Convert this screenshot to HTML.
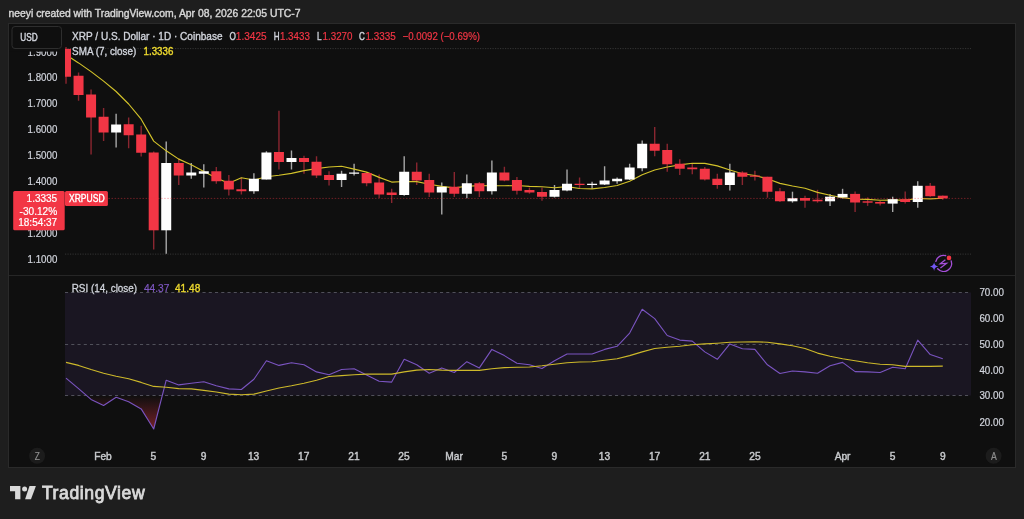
<!DOCTYPE html><html><head><meta charset="utf-8"><style>html,body{margin:0;padding:0;background:#1e1e1e;width:1024px;height:519px;overflow:hidden}svg{display:block;will-change:transform}text{font-family:"Liberation Sans",sans-serif}</style></head><body>
<svg width="1024" height="519" viewBox="0 0 1024 519">
<rect x="0" y="0" width="1024" height="519" fill="#1e1e1e"/>
<text x="8.5" y="16.6" font-size="10.4" fill="#d6d6d6" stroke="#d6d6d6" stroke-width="0.4" textLength="292" lengthAdjust="spacingAndGlyphs">neeyi created with TradingView.com, Apr 08, 2026 22:05 UTC-7</text>
<rect x="8.5" y="23.5" width="1007" height="444" fill="#0f0f0f" stroke="#2a2a2a" stroke-width="1"/>
<defs><clipPath id="cm"><rect x="65" y="24" width="906" height="251"/></clipPath><clipPath id="cr"><rect x="65" y="276" width="906" height="160"/></clipPath><linearGradient id="os" x1="0" y1="395.4" x2="0" y2="429" gradientUnits="userSpaceOnUse"><stop offset="0" stop-color="#f23645" stop-opacity="0"/><stop offset="1" stop-color="#f23645" stop-opacity="0.45"/></linearGradient></defs>
<line x1="65" y1="48.6" x2="971" y2="48.6" stroke="#353535" stroke-width="1" stroke-dasharray="1.2 1.3"/>
<line x1="65" y1="254.1" x2="971" y2="254.1" stroke="#353535" stroke-width="1" stroke-dasharray="1.2 1.3"/>
<line x1="9" y1="275.5" x2="1015" y2="275.5" stroke="#262626" stroke-width="1"/>
<g clip-path="url(#cm)">
<line x1="66.02" y1="47.00" x2="66.02" y2="83.75" stroke="#8a2630" stroke-width="1.4"/>
<line x1="78.55" y1="72.50" x2="78.55" y2="100.75" stroke="#8a2630" stroke-width="1.4"/>
<line x1="91.07" y1="89.50" x2="91.07" y2="154.50" stroke="#8a2630" stroke-width="1.4"/>
<line x1="103.60" y1="108.00" x2="103.60" y2="141.00" stroke="#8a2630" stroke-width="1.4"/>
<line x1="116.12" y1="113.75" x2="116.12" y2="147.50" stroke="#a8a8a8" stroke-width="1.4"/>
<line x1="128.65" y1="117.50" x2="128.65" y2="148.25" stroke="#8a2630" stroke-width="1.4"/>
<line x1="141.18" y1="125.75" x2="141.18" y2="156.50" stroke="#8a2630" stroke-width="1.4"/>
<line x1="153.70" y1="151.50" x2="153.70" y2="249.50" stroke="#8a2630" stroke-width="1.4"/>
<line x1="166.22" y1="141.50" x2="166.22" y2="253.75" stroke="#a8a8a8" stroke-width="1.4"/>
<line x1="178.75" y1="158.50" x2="178.75" y2="185.00" stroke="#8a2630" stroke-width="1.4"/>
<line x1="191.27" y1="163.00" x2="191.27" y2="178.75" stroke="#a8a8a8" stroke-width="1.4"/>
<line x1="203.80" y1="164.25" x2="203.80" y2="187.50" stroke="#a8a8a8" stroke-width="1.4"/>
<line x1="216.32" y1="167.00" x2="216.32" y2="183.75" stroke="#8a2630" stroke-width="1.4"/>
<line x1="228.85" y1="175.00" x2="228.85" y2="195.50" stroke="#8a2630" stroke-width="1.4"/>
<line x1="241.38" y1="177.50" x2="241.38" y2="194.50" stroke="#8a2630" stroke-width="1.4"/>
<line x1="253.90" y1="173.25" x2="253.90" y2="193.75" stroke="#a8a8a8" stroke-width="1.4"/>
<line x1="266.43" y1="151.25" x2="266.43" y2="179.50" stroke="#a8a8a8" stroke-width="1.4"/>
<line x1="278.95" y1="110.75" x2="278.95" y2="169.50" stroke="#8a2630" stroke-width="1.4"/>
<line x1="291.48" y1="150.50" x2="291.48" y2="169.50" stroke="#a8a8a8" stroke-width="1.4"/>
<line x1="304.00" y1="155.75" x2="304.00" y2="173.75" stroke="#8a2630" stroke-width="1.4"/>
<line x1="316.52" y1="156.25" x2="316.52" y2="178.00" stroke="#8a2630" stroke-width="1.4"/>
<line x1="329.05" y1="171.25" x2="329.05" y2="185.50" stroke="#8a2630" stroke-width="1.4"/>
<line x1="341.57" y1="170.75" x2="341.57" y2="187.00" stroke="#a8a8a8" stroke-width="1.4"/>
<line x1="354.10" y1="163.75" x2="354.10" y2="175.50" stroke="#a8a8a8" stroke-width="1.4"/>
<line x1="366.62" y1="172.00" x2="366.62" y2="186.25" stroke="#8a2630" stroke-width="1.4"/>
<line x1="379.15" y1="174.50" x2="379.15" y2="198.00" stroke="#8a2630" stroke-width="1.4"/>
<line x1="391.67" y1="188.75" x2="391.67" y2="203.00" stroke="#8a2630" stroke-width="1.4"/>
<line x1="404.20" y1="156.25" x2="404.20" y2="195.75" stroke="#a8a8a8" stroke-width="1.4"/>
<line x1="416.73" y1="162.50" x2="416.73" y2="185.00" stroke="#8a2630" stroke-width="1.4"/>
<line x1="429.25" y1="173.75" x2="429.25" y2="197.00" stroke="#8a2630" stroke-width="1.4"/>
<line x1="441.77" y1="182.50" x2="441.77" y2="214.50" stroke="#a8a8a8" stroke-width="1.4"/>
<line x1="454.30" y1="172.00" x2="454.30" y2="197.00" stroke="#8a2630" stroke-width="1.4"/>
<line x1="466.83" y1="174.50" x2="466.83" y2="198.25" stroke="#a8a8a8" stroke-width="1.4"/>
<line x1="479.35" y1="182.00" x2="479.35" y2="197.00" stroke="#8a2630" stroke-width="1.4"/>
<line x1="491.88" y1="160.50" x2="491.88" y2="194.50" stroke="#a8a8a8" stroke-width="1.4"/>
<line x1="504.40" y1="166.75" x2="504.40" y2="181.25" stroke="#8a2630" stroke-width="1.4"/>
<line x1="516.92" y1="177.00" x2="516.92" y2="194.50" stroke="#8a2630" stroke-width="1.4"/>
<line x1="529.45" y1="187.50" x2="529.45" y2="193.75" stroke="#8a2630" stroke-width="1.4"/>
<line x1="541.98" y1="187.50" x2="541.98" y2="200.75" stroke="#8a2630" stroke-width="1.4"/>
<line x1="554.50" y1="185.00" x2="554.50" y2="197.50" stroke="#a8a8a8" stroke-width="1.4"/>
<line x1="567.02" y1="169.50" x2="567.02" y2="191.25" stroke="#a8a8a8" stroke-width="1.4"/>
<line x1="579.55" y1="177.50" x2="579.55" y2="188.00" stroke="#8a2630" stroke-width="1.4"/>
<line x1="592.08" y1="181.75" x2="592.08" y2="188.75" stroke="#a8a8a8" stroke-width="1.4"/>
<line x1="604.60" y1="166.25" x2="604.60" y2="185.00" stroke="#a8a8a8" stroke-width="1.4"/>
<line x1="617.12" y1="177.50" x2="617.12" y2="183.75" stroke="#a8a8a8" stroke-width="1.4"/>
<line x1="629.65" y1="163.75" x2="629.65" y2="180.00" stroke="#a8a8a8" stroke-width="1.4"/>
<line x1="642.18" y1="140.50" x2="642.18" y2="171.25" stroke="#a8a8a8" stroke-width="1.4"/>
<line x1="654.70" y1="127.00" x2="654.70" y2="156.25" stroke="#8a2630" stroke-width="1.4"/>
<line x1="667.23" y1="143.75" x2="667.23" y2="171.75" stroke="#8a2630" stroke-width="1.4"/>
<line x1="679.75" y1="159.25" x2="679.75" y2="175.00" stroke="#8a2630" stroke-width="1.4"/>
<line x1="692.28" y1="163.75" x2="692.28" y2="174.25" stroke="#8a2630" stroke-width="1.4"/>
<line x1="704.80" y1="167.00" x2="704.80" y2="180.50" stroke="#8a2630" stroke-width="1.4"/>
<line x1="717.33" y1="173.75" x2="717.33" y2="188.75" stroke="#8a2630" stroke-width="1.4"/>
<line x1="729.85" y1="163.75" x2="729.85" y2="190.50" stroke="#a8a8a8" stroke-width="1.4"/>
<line x1="742.38" y1="171.25" x2="742.38" y2="185.00" stroke="#8a2630" stroke-width="1.4"/>
<line x1="754.90" y1="170.75" x2="754.90" y2="180.50" stroke="#8a2630" stroke-width="1.4"/>
<line x1="767.43" y1="176.75" x2="767.43" y2="197.75" stroke="#8a2630" stroke-width="1.4"/>
<line x1="779.95" y1="188.00" x2="779.95" y2="202.00" stroke="#8a2630" stroke-width="1.4"/>
<line x1="792.48" y1="191.70" x2="792.48" y2="202.60" stroke="#a8a8a8" stroke-width="1.4"/>
<line x1="805.00" y1="195.80" x2="805.00" y2="207.70" stroke="#8a2630" stroke-width="1.4"/>
<line x1="817.53" y1="189.80" x2="817.53" y2="202.70" stroke="#8a2630" stroke-width="1.4"/>
<line x1="830.05" y1="193.90" x2="830.05" y2="205.90" stroke="#a8a8a8" stroke-width="1.4"/>
<line x1="842.58" y1="188.80" x2="842.58" y2="198.50" stroke="#a8a8a8" stroke-width="1.4"/>
<line x1="855.10" y1="191.60" x2="855.10" y2="212.00" stroke="#8a2630" stroke-width="1.4"/>
<line x1="867.62" y1="197.40" x2="867.62" y2="205.90" stroke="#8a2630" stroke-width="1.4"/>
<line x1="880.15" y1="200.90" x2="880.15" y2="205.50" stroke="#8a2630" stroke-width="1.4"/>
<line x1="892.68" y1="196.70" x2="892.68" y2="212.00" stroke="#a8a8a8" stroke-width="1.4"/>
<line x1="905.20" y1="191.60" x2="905.20" y2="203.60" stroke="#8a2630" stroke-width="1.4"/>
<line x1="917.73" y1="181.20" x2="917.73" y2="207.80" stroke="#a8a8a8" stroke-width="1.4"/>
<line x1="930.25" y1="183.10" x2="930.25" y2="196.70" stroke="#8a2630" stroke-width="1.4"/>
<line x1="942.78" y1="195.50" x2="942.78" y2="199.70" stroke="#8a2630" stroke-width="1.4"/>
<polyline points="66.02,54.70 78.55,62.90 91.07,71.60 103.60,81.10 116.12,91.50 128.65,104.00 141.18,119.18 153.70,141.11 166.22,150.83 178.75,159.11 191.27,164.83 203.80,171.51 216.32,178.08 228.85,183.33 241.38,177.75 253.90,180.00 266.43,176.71 278.95,175.21 291.48,173.32 304.00,170.57 316.52,168.57 329.05,166.96 341.57,166.25 354.10,169.11 366.62,172.14 379.15,177.36 391.67,182.07 404.20,181.54 416.73,181.61 429.25,184.29 441.77,186.32 454.30,187.82 466.83,186.21 479.35,185.68 491.88,185.79 504.40,185.79 516.92,185.54 529.45,186.36 541.98,186.79 554.50,187.75 567.02,186.68 579.55,188.46 592.08,188.93 604.60,187.46 617.12,185.50 629.65,181.32 642.18,174.71 654.70,170.00 667.23,167.04 679.75,164.89 692.28,163.29 704.80,163.39 717.33,165.89 729.85,170.00 742.38,173.71 754.90,175.50 767.43,178.79 779.95,183.36 792.48,186.03 805.00,188.27 817.53,192.39 830.05,195.24 842.58,197.69 855.10,199.22 867.62,199.43 880.15,200.20 892.68,199.99 905.20,200.09 917.73,198.53 930.25,198.86 942.78,198.27" fill="none" stroke="#d2c22a" stroke-width="1.15" stroke-linejoin="round"/>
<rect x="61.02" y="48.90" width="10" height="27.85" fill="#f23645"/>
<rect x="73.55" y="75.75" width="10" height="19.25" fill="#f23645"/>
<rect x="86.07" y="94.50" width="10" height="23.00" fill="#f23645"/>
<rect x="98.60" y="116.75" width="10" height="15.75" fill="#f23645"/>
<rect x="111.12" y="124.50" width="10" height="8.00" fill="#ffffff"/>
<rect x="123.65" y="124.25" width="10" height="11.00" fill="#f23645"/>
<rect x="136.18" y="134.50" width="10" height="18.25" fill="#f23645"/>
<rect x="148.70" y="152.50" width="10" height="77.80" fill="#f23645"/>
<rect x="161.22" y="163.00" width="10" height="67.30" fill="#ffffff"/>
<rect x="173.75" y="163.00" width="10" height="12.50" fill="#f23645"/>
<rect x="186.27" y="172.50" width="10" height="3.00" fill="#ffffff"/>
<rect x="198.80" y="171.25" width="10" height="2.50" fill="#ffffff"/>
<rect x="211.32" y="171.25" width="10" height="10.00" fill="#f23645"/>
<rect x="223.85" y="180.75" width="10" height="8.75" fill="#f23645"/>
<rect x="236.38" y="189.25" width="10" height="2.00" fill="#f23645"/>
<rect x="248.90" y="178.75" width="10" height="12.50" fill="#ffffff"/>
<rect x="261.43" y="152.50" width="10" height="27.00" fill="#ffffff"/>
<rect x="273.95" y="152.00" width="10" height="10.00" fill="#f23645"/>
<rect x="286.48" y="158.00" width="10" height="4.00" fill="#ffffff"/>
<rect x="299.00" y="158.00" width="10" height="4.00" fill="#f23645"/>
<rect x="311.52" y="161.75" width="10" height="13.75" fill="#f23645"/>
<rect x="324.05" y="175.00" width="10" height="5.00" fill="#f23645"/>
<rect x="336.57" y="173.75" width="10" height="6.25" fill="#ffffff"/>
<rect x="349.10" y="172.50" width="10" height="1.25" fill="#ffffff"/>
<rect x="361.62" y="173.00" width="10" height="10.25" fill="#f23645"/>
<rect x="374.15" y="182.50" width="10" height="12.00" fill="#f23645"/>
<rect x="386.67" y="192.50" width="10" height="2.50" fill="#f23645"/>
<rect x="399.20" y="171.75" width="10" height="23.25" fill="#ffffff"/>
<rect x="411.73" y="171.75" width="10" height="8.75" fill="#f23645"/>
<rect x="424.25" y="180.00" width="10" height="12.50" fill="#f23645"/>
<rect x="436.77" y="186.75" width="10" height="5.75" fill="#ffffff"/>
<rect x="449.30" y="186.75" width="10" height="7.00" fill="#f23645"/>
<rect x="461.83" y="183.25" width="10" height="10.50" fill="#ffffff"/>
<rect x="474.35" y="183.25" width="10" height="8.00" fill="#f23645"/>
<rect x="486.88" y="172.50" width="10" height="18.75" fill="#ffffff"/>
<rect x="499.40" y="172.50" width="10" height="8.00" fill="#f23645"/>
<rect x="511.92" y="180.00" width="10" height="10.75" fill="#f23645"/>
<rect x="524.45" y="190.00" width="10" height="2.50" fill="#f23645"/>
<rect x="536.98" y="192.00" width="10" height="4.75" fill="#f23645"/>
<rect x="549.50" y="190.00" width="10" height="6.75" fill="#ffffff"/>
<rect x="562.02" y="183.75" width="10" height="6.75" fill="#ffffff"/>
<rect x="574.55" y="183.75" width="10" height="1.25" fill="#f23645"/>
<rect x="587.08" y="183.75" width="10" height="1.25" fill="#ffffff"/>
<rect x="599.60" y="180.50" width="10" height="4.00" fill="#ffffff"/>
<rect x="612.12" y="178.75" width="10" height="2.50" fill="#ffffff"/>
<rect x="624.65" y="167.50" width="10" height="12.00" fill="#ffffff"/>
<rect x="637.18" y="143.75" width="10" height="24.50" fill="#ffffff"/>
<rect x="649.70" y="143.75" width="10" height="7.00" fill="#f23645"/>
<rect x="662.23" y="150.00" width="10" height="14.25" fill="#f23645"/>
<rect x="674.75" y="163.75" width="10" height="5.00" fill="#f23645"/>
<rect x="687.28" y="167.50" width="10" height="1.75" fill="#f23645"/>
<rect x="699.80" y="168.75" width="10" height="10.75" fill="#f23645"/>
<rect x="712.33" y="178.75" width="10" height="6.25" fill="#f23645"/>
<rect x="724.85" y="172.50" width="10" height="12.50" fill="#ffffff"/>
<rect x="737.38" y="172.50" width="10" height="4.25" fill="#f23645"/>
<rect x="749.90" y="175.50" width="10" height="1.25" fill="#f23645"/>
<rect x="762.43" y="176.75" width="10" height="15.00" fill="#f23645"/>
<rect x="774.95" y="191.25" width="10" height="10.00" fill="#f23645"/>
<rect x="787.48" y="198.20" width="10" height="3.10" fill="#ffffff"/>
<rect x="800.00" y="198.00" width="10" height="2.70" fill="#f23645"/>
<rect x="812.53" y="199.70" width="10" height="1.60" fill="#f23645"/>
<rect x="825.05" y="196.70" width="10" height="4.60" fill="#ffffff"/>
<rect x="837.58" y="193.90" width="10" height="3.50" fill="#ffffff"/>
<rect x="850.10" y="193.90" width="10" height="8.60" fill="#f23645"/>
<rect x="862.62" y="201.30" width="10" height="1.40" fill="#f23645"/>
<rect x="875.15" y="202.00" width="10" height="1.60" fill="#f23645"/>
<rect x="887.68" y="199.20" width="10" height="4.40" fill="#ffffff"/>
<rect x="900.20" y="199.20" width="10" height="2.80" fill="#f23645"/>
<rect x="912.73" y="185.80" width="10" height="16.20" fill="#ffffff"/>
<rect x="925.25" y="185.80" width="10" height="10.40" fill="#f23645"/>
<rect x="937.78" y="195.70" width="10" height="2.70" fill="#f23645"/>
</g>
<line x1="65" y1="198.4" x2="971" y2="198.4" stroke="#f23645" stroke-opacity="0.42" stroke-width="1" stroke-dasharray="1.5 1.6"/>
<rect x="65" y="292.5" width="906" height="103" fill="#1a1622"/>
<line x1="65" y1="292.5" x2="971" y2="292.5" stroke="#50505a" stroke-width="1" stroke-dasharray="3.1 3.15"/>
<line x1="65" y1="344.5" x2="971" y2="344.5" stroke="#50505a" stroke-width="1" stroke-dasharray="3.1 3.15"/>
<line x1="65" y1="395.5" x2="971" y2="395.5" stroke="#50505a" stroke-width="1" stroke-dasharray="3.1 3.15"/>
<g clip-path="url(#cr)">
<polygon points="86.44,395.40 91.07,399.40 103.60,405.50 116.12,397.20 128.65,401.80 141.18,408.90 153.70,429.00 162.32,395.40" fill="url(#os)"/>
<polyline points="66.02,378.10 78.55,388.60 91.07,399.40 103.60,405.50 116.12,397.20 128.65,401.80 141.18,408.90 153.70,429.00 166.22,380.20 178.75,384.90 191.27,383.30 203.80,381.80 216.32,385.80 228.85,388.90 241.38,389.50 253.90,379.30 266.43,360.80 278.95,365.40 291.48,362.70 304.00,364.80 316.52,371.90 329.05,374.70 341.57,369.50 354.10,368.80 366.62,375.00 379.15,381.20 391.67,382.10 404.20,359.30 416.73,364.80 429.25,373.20 441.77,367.90 454.30,372.50 466.83,361.70 479.35,367.90 491.88,349.40 504.40,355.60 516.92,363.30 529.45,364.80 541.98,368.50 554.50,360.80 567.02,354.00 579.55,354.00 592.08,354.00 604.60,349.40 617.12,346.30 629.65,333.10 642.18,309.30 654.70,318.60 667.23,335.50 679.75,340.10 692.28,341.10 704.80,351.90 717.33,359.30 729.85,343.90 742.38,348.80 754.90,349.40 767.43,364.80 779.95,373.50 792.48,371.00 805.00,371.90 817.53,373.20 830.05,365.70 842.58,362.40 855.10,371.60 867.62,371.90 880.15,372.50 892.68,367.30 905.20,368.80 917.73,340.10 930.25,354.60 942.78,358.70" fill="none" stroke="#7a54c0" stroke-width="1.1" stroke-linejoin="round"/>
<polyline points="66.02,362.40 78.55,365.40 91.07,369.50 103.60,373.20 116.12,376.20 128.65,378.70 141.18,382.40 153.70,386.40 166.22,387.30 178.75,388.60 191.27,388.90 203.80,390.40 216.32,392.00 228.85,394.10 241.38,394.70 253.90,394.10 266.43,391.00 278.95,388.00 291.48,385.80 304.00,383.30 316.52,380.20 329.05,376.50 341.57,375.60 354.10,374.70 366.62,374.10 379.15,374.10 391.67,374.10 404.20,371.90 416.73,370.10 429.25,369.50 441.77,370.10 454.30,370.40 466.83,370.40 479.35,370.40 491.88,368.80 504.40,367.60 516.92,367.30 529.45,367.00 541.98,365.80 554.50,364.20 567.02,362.70 579.55,362.00 592.08,361.70 604.60,360.20 617.12,358.70 629.65,355.60 642.18,351.90 654.70,348.50 667.23,347.20 679.75,346.30 692.28,344.80 704.80,343.90 717.33,343.20 729.85,342.30 742.38,342.00 754.90,341.70 767.43,342.30 779.95,343.90 792.48,345.70 805.00,348.50 817.53,353.10 830.05,356.20 842.58,358.70 855.10,360.80 867.62,362.70 880.15,364.20 892.68,364.80 905.20,366.40 917.73,366.40 930.25,366.40 942.78,366.10" fill="none" stroke="#cdb92a" stroke-width="1.1" stroke-linejoin="round"/>
</g>
<text x="57.3" y="55.90" font-size="10" fill="#d1d4dc" text-anchor="end" textLength="29.7" lengthAdjust="spacingAndGlyphs" stroke="#d1d4dc" stroke-width="0.2">1.9000</text>
<text x="57.3" y="81.35" font-size="10" fill="#d1d4dc" text-anchor="end" textLength="29.7" lengthAdjust="spacingAndGlyphs" stroke="#d1d4dc" stroke-width="0.2">1.8000</text>
<text x="57.3" y="107.10" font-size="10" fill="#d1d4dc" text-anchor="end" textLength="29.7" lengthAdjust="spacingAndGlyphs" stroke="#d1d4dc" stroke-width="0.2">1.7000</text>
<text x="57.3" y="132.90" font-size="10" fill="#d1d4dc" text-anchor="end" textLength="29.7" lengthAdjust="spacingAndGlyphs" stroke="#d1d4dc" stroke-width="0.2">1.6000</text>
<text x="57.3" y="158.70" font-size="10" fill="#d1d4dc" text-anchor="end" textLength="29.7" lengthAdjust="spacingAndGlyphs" stroke="#d1d4dc" stroke-width="0.2">1.5000</text>
<text x="57.3" y="184.60" font-size="10" fill="#d1d4dc" text-anchor="end" textLength="29.7" lengthAdjust="spacingAndGlyphs" stroke="#d1d4dc" stroke-width="0.2">1.4000</text>
<text x="57.3" y="236.60" font-size="10" fill="#d1d4dc" text-anchor="end" textLength="29.7" lengthAdjust="spacingAndGlyphs" stroke="#d1d4dc" stroke-width="0.2">1.2000</text>
<text x="57.3" y="262.50" font-size="10" fill="#d1d4dc" text-anchor="end" textLength="29.7" lengthAdjust="spacingAndGlyphs" stroke="#d1d4dc" stroke-width="0.2">1.1000</text>
<rect x="9" y="24" width="55" height="27.6" fill="#0f0f0f"/>
<rect x="12" y="26.5" width="49.5" height="22" rx="3" fill="#0f0f0f" stroke="#2e2e2e" stroke-width="1"/>
<text x="20.2" y="41" font-size="10.3" fill="#d1d4dc" stroke="#d1d4dc" stroke-width="0.45" textLength="17.4" lengthAdjust="spacingAndGlyphs">USD</text>
<text x="72.1" y="39.95" font-size="10.6" fill="#d1d4dc" stroke="#d1d4dc" stroke-width="0.35" textLength="150.4" lengthAdjust="spacingAndGlyphs">XRP / U.S. Dollar · 1D · Coinbase</text>
<text x="229.4" y="40.1" font-size="10.6" fill="#d1d4dc" stroke="#d1d4dc" stroke-width="0.4" textLength="6.4" lengthAdjust="spacingAndGlyphs">O</text>
<text x="235.8" y="40.1" font-size="10.6" fill="#f23645" textLength="30.8" lengthAdjust="spacingAndGlyphs" stroke="#f23645" stroke-width="0.2">1.3425</text>
<text x="273.7" y="40.1" font-size="10.6" fill="#d1d4dc" stroke="#d1d4dc" stroke-width="0.4" textLength="5.8" lengthAdjust="spacingAndGlyphs">H</text>
<text x="280" y="40.1" font-size="10.6" fill="#f23645" textLength="29.8" lengthAdjust="spacingAndGlyphs" stroke="#f23645" stroke-width="0.2">1.3433</text>
<text x="317.1" y="40.1" font-size="10.6" fill="#d1d4dc" stroke="#d1d4dc" stroke-width="0.4" textLength="4.6" lengthAdjust="spacingAndGlyphs">L</text>
<text x="322.5" y="40.1" font-size="10.6" fill="#f23645" textLength="30" lengthAdjust="spacingAndGlyphs" stroke="#f23645" stroke-width="0.2">1.3270</text>
<text x="359.1" y="40.1" font-size="10.6" fill="#d1d4dc" stroke="#d1d4dc" stroke-width="0.4" textLength="5.8" lengthAdjust="spacingAndGlyphs">C</text>
<text x="365.5" y="40.1" font-size="10.6" fill="#f23645" textLength="30.3" lengthAdjust="spacingAndGlyphs" stroke="#f23645" stroke-width="0.2">1.3335</text>
<text x="402.6" y="40.1" font-size="10.6" fill="#f23645" textLength="77.4" lengthAdjust="spacingAndGlyphs" stroke="#f23645" stroke-width="0.2">−0.0092 (−0.69%)</text>
<text x="72.1" y="54.7" font-size="10.4" fill="#d1d4dc" stroke="#d1d4dc" stroke-width="0.35" textLength="64.1" lengthAdjust="spacingAndGlyphs">SMA (7, close)</text>
<text x="143.6" y="54.6" font-size="10.4" fill="#ecd82e" stroke="#ecd82e" stroke-width="0.4" textLength="29.7" lengthAdjust="spacingAndGlyphs">1.3336</text>
<rect x="13.2" y="190.9" width="51.5" height="39.4" rx="1.5" fill="#f23645"/>
<text x="57.2" y="202.3" font-size="10" fill="#ffffff" text-anchor="end" stroke="#ffffff" stroke-width="0.2">1.3335</text>
<text x="57.2" y="214.8" font-size="10" fill="#ffffff" text-anchor="end" textLength="37.6" lengthAdjust="spacingAndGlyphs" stroke="#ffffff" stroke-width="0.2">-30.12%</text>
<text x="57.2" y="226.1" font-size="10" fill="#ffffff" text-anchor="end" stroke="#ffffff" stroke-width="0.2">18:54:37</text>
<rect x="65" y="190.9" width="42.9" height="15.1" rx="1.5" fill="#f23645"/>
<text x="69" y="202.2" font-size="10.2" fill="#ffffff" stroke="#ffffff" stroke-width="0.4" textLength="35.6" lengthAdjust="spacingAndGlyphs">XRPUSD</text>
<text x="71.7" y="291.7" font-size="10.4" fill="#d1d4dc" stroke="#d1d4dc" stroke-width="0.3" textLength="65.4" lengthAdjust="spacingAndGlyphs">RSI (14, close)</text>
<text x="143.9" y="291.7" font-size="10.4" fill="#7e57c2" textLength="25.6" lengthAdjust="spacingAndGlyphs" stroke="#7e57c2" stroke-width="0.2">44.37</text>
<text x="175" y="291.6" font-size="10.4" fill="#ecd82e" stroke="#ecd82e" stroke-width="0.35" textLength="25.3" lengthAdjust="spacingAndGlyphs">41.48</text>
<text x="979.4" y="296.00" font-size="10" fill="#d1d4dc" textLength="24.6" lengthAdjust="spacingAndGlyphs" stroke="#d1d4dc" stroke-width="0.2">70.00</text>
<text x="979.4" y="322.00" font-size="10" fill="#d1d4dc" textLength="24.6" lengthAdjust="spacingAndGlyphs" stroke="#d1d4dc" stroke-width="0.2">60.00</text>
<text x="979.4" y="347.90" font-size="10" fill="#d1d4dc" textLength="24.6" lengthAdjust="spacingAndGlyphs" stroke="#d1d4dc" stroke-width="0.2">50.00</text>
<text x="979.4" y="373.70" font-size="10" fill="#d1d4dc" textLength="24.6" lengthAdjust="spacingAndGlyphs" stroke="#d1d4dc" stroke-width="0.2">40.00</text>
<text x="979.4" y="399.40" font-size="10" fill="#d1d4dc" textLength="24.6" lengthAdjust="spacingAndGlyphs" stroke="#d1d4dc" stroke-width="0.2">30.00</text>
<text x="979.4" y="425.60" font-size="10" fill="#d1d4dc" textLength="24.6" lengthAdjust="spacingAndGlyphs" stroke="#d1d4dc" stroke-width="0.2">20.00</text>
<text x="103" y="459.6" font-size="10.2" fill="#c8cacd" stroke="#c8cacd" stroke-width="0.42" text-anchor="middle">Feb</text>
<text x="153.4" y="459.6" font-size="10.2" fill="#c8cacd" stroke="#c8cacd" stroke-width="0.42" text-anchor="middle">5</text>
<text x="203.5" y="459.6" font-size="10.2" fill="#c8cacd" stroke="#c8cacd" stroke-width="0.42" text-anchor="middle">9</text>
<text x="253.6" y="459.6" font-size="10.2" fill="#c8cacd" stroke="#c8cacd" stroke-width="0.42" text-anchor="middle">13</text>
<text x="303.7" y="459.6" font-size="10.2" fill="#c8cacd" stroke="#c8cacd" stroke-width="0.42" text-anchor="middle">17</text>
<text x="353.9" y="459.6" font-size="10.2" fill="#c8cacd" stroke="#c8cacd" stroke-width="0.42" text-anchor="middle">21</text>
<text x="404" y="459.6" font-size="10.2" fill="#c8cacd" stroke="#c8cacd" stroke-width="0.42" text-anchor="middle">25</text>
<text x="454.1" y="459.6" font-size="10.2" fill="#c8cacd" stroke="#c8cacd" stroke-width="0.42" text-anchor="middle">Mar</text>
<text x="504.3" y="459.6" font-size="10.2" fill="#c8cacd" stroke="#c8cacd" stroke-width="0.42" text-anchor="middle">5</text>
<text x="554.4" y="459.6" font-size="10.2" fill="#c8cacd" stroke="#c8cacd" stroke-width="0.42" text-anchor="middle">9</text>
<text x="604.5" y="459.6" font-size="10.2" fill="#c8cacd" stroke="#c8cacd" stroke-width="0.42" text-anchor="middle">13</text>
<text x="654.6" y="459.6" font-size="10.2" fill="#c8cacd" stroke="#c8cacd" stroke-width="0.42" text-anchor="middle">17</text>
<text x="704.8" y="459.6" font-size="10.2" fill="#c8cacd" stroke="#c8cacd" stroke-width="0.42" text-anchor="middle">21</text>
<text x="754.9" y="459.6" font-size="10.2" fill="#c8cacd" stroke="#c8cacd" stroke-width="0.42" text-anchor="middle">25</text>
<text x="842.6" y="459.6" font-size="10.2" fill="#c8cacd" stroke="#c8cacd" stroke-width="0.42" text-anchor="middle">Apr</text>
<text x="892.7" y="459.6" font-size="10.2" fill="#c8cacd" stroke="#c8cacd" stroke-width="0.42" text-anchor="middle">5</text>
<text x="942.8" y="459.6" font-size="10.2" fill="#c8cacd" stroke="#c8cacd" stroke-width="0.42" text-anchor="middle">9</text>
<circle cx="37.1" cy="455.8" r="8" fill="#1c1c1c"/><text x="34.8" y="459.5" font-size="10.2" fill="#8f8f8f" textLength="5.1" lengthAdjust="spacingAndGlyphs" stroke="#8f8f8f" stroke-width="0.2">Z</text>
<circle cx="993.6" cy="455.8" r="8" fill="#1c1c1c"/><text x="990.9" y="459.5" font-size="10.2" fill="#8f8f8f" textLength="5.8" lengthAdjust="spacingAndGlyphs" stroke="#8f8f8f" stroke-width="0.2">A</text>
<g><path d="M 935.87 261.33 A 8.0 8.0 0 0 1 945.67 255.67" fill="none" stroke="#a44fd8" stroke-width="1.4" stroke-linecap="round"/><path d="M 951.19 260.87 A 8.0 8.0 0 0 1 937.65 268.75" fill="none" stroke="#a44fd8" stroke-width="1.4" stroke-linecap="round"/><circle cx="949" cy="257.9" r="2.3" fill="#f23645"/><path d="M 934.1 262.3 Q 934.6 266.1 938.4 266.6 Q 934.6 267.1 934.1 270.9 Q 933.6 267.1 929.8 266.6 Q 933.6 266.1 934.1 262.3 Z" fill="#7457f6"/><path d="M 945.4 259.8 L 940.3 263.8 L 946.5 263.4 L 940.4 267.9" fill="none" stroke="#a44fd8" stroke-width="1.3" stroke-linejoin="miter"/></g>
<g fill="#d9d9d9"><path d="M10 486 H20.4 V499.2 H15.1 V491.3 H10 Z"/><circle cx="24.6" cy="489" r="2.5"/><path d="M29.5 486 H35.9 L31 499.2 H25.1 Z"/></g>
<text x="41.9" y="499.2" font-size="17.6" fill="#d9d9d9" stroke="#d9d9d9" stroke-width="0.8" textLength="102.8" lengthAdjust="spacing">TradingView</text>
</svg></body></html>
